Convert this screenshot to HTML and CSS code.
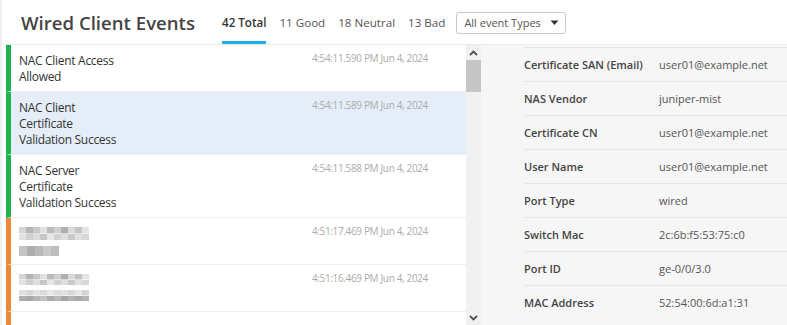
FILE: index.html
```html
<!DOCTYPE html>
<html lang="en">
<head>
    <meta charset="UTF-8">
    <meta name="viewport" content="width=device-width, initial-scale=1.0">
    <title>Wired Client Events</title>
    <link rel="stylesheet" href="styles.css">
</head>
<body>

<div class="page">
    <div class="header">
        <h1>Wired Client Events</h1>
        <div class="tabs">
            <span class="tab active">42 Total</span>
            <span class="tab">11 Good</span>
            <span class="tab">18 Neutral</span>
            <span class="tab">13 Bad</span>
        </div>
        <div class="select">
            <span>All event Types</span>
            <svg width="9" height="6" viewBox="0 0 9 6"><path d="M0.5 0.5h8L4.5 5z" fill="#333"/></svg>
        </div>
    </div>

    <div class="content">
        <div class="list">
            <div class="event good">
                <div class="event-name">NAC Client Access Allowed</div>
                <div class="event-time">4:54:11.590 PM Jun 4, 2024</div>
            </div>
            <div class="event good selected">
                <div class="event-name">NAC Client Certificate Validation Success</div>
                <div class="event-time">4:54:11.589 PM Jun 4, 2024</div>
            </div>
            <div class="event good">
                <div class="event-name">NAC Server Certificate Validation Success</div>
                <div class="event-time">4:54:11.588 PM Jun 4, 2024</div>
            </div>
            <div class="event neutral">
                <div class="event-name">
                    <div class="mosaic m1"></div>
                    <div class="mosaic m2 short"></div>
                </div>
                <div class="event-time">4:51:17.469 PM Jun 4, 2024</div>
            </div>
            <div class="event neutral">
                <div class="event-name">
                    <div class="mosaic m3"></div>
                    <div class="mosaic m4"></div>
                </div>
                <div class="event-time">4:51:16.469 PM Jun 4, 2024</div>
            </div>
            <div class="event neutral">
                <div class="event-name"></div>
            </div>
        </div>

        <div class="scrollbar">
            <div class="arrow">
                <svg width="9" height="6" viewBox="0 0 9 6"><path d="M1 5L4.5 1.5L8 5" fill="none" stroke="#505050" stroke-width="1.8"/></svg>
            </div>
            <div class="thumb"></div>
            <div class="track"></div>
            <div class="arrow">
                <svg width="9" height="6" viewBox="0 0 9 6"><path d="M1 1L4.5 4.5L8 1" fill="none" stroke="#505050" stroke-width="1.8"/></svg>
            </div>
        </div>

        <div class="details">
            <div class="detail-row"><span class="detail-label">Certificate SAN (Email)</span><span class="detail-value">user01@example.net</span></div>
            <div class="detail-row"><span class="detail-label">NAS Vendor</span><span class="detail-value">juniper-mist</span></div>
            <div class="detail-row"><span class="detail-label">Certificate CN</span><span class="detail-value">user01@example.net</span></div>
            <div class="detail-row"><span class="detail-label">User Name</span><span class="detail-value">user01@example.net</span></div>
            <div class="detail-row"><span class="detail-label">Port Type</span><span class="detail-value">wired</span></div>
            <div class="detail-row"><span class="detail-label">Switch Mac</span><span class="detail-value">2c:6b:f5:53:75:c0</span></div>
            <div class="detail-row"><span class="detail-label">Port ID</span><span class="detail-value">ge-0/0/3.0</span></div>
            <div class="detail-row"><span class="detail-label">MAC Address</span><span class="detail-value">52:54:00:6d:a1:31</span></div>
        </div>
    </div>
</div>

</body>
</html>
```

FILE: styles.css
```css
body {
    margin: 0;
    font-family: "Open Sans", sans-serif;
    background-color: #fff;
    overflow: hidden;
}
.page {
    height: 325px;
    border-left: 2px solid #f0f0f0;
    overflow: hidden;
}
.header {
    display: flex;
    align-items: flex-start;
    height: 44px;
    border-bottom: 1px solid #ebebeb;
    padding-left: 19px;
}
h1 {
    margin: 9px 0 0;
    font-size: 18.6px;
    line-height: 27px;
    font-weight: 600;
    color: #444;
}
.tabs {
    display: flex;
    gap: 13px;
    margin-left: 27px;
}
.tab {
    padding: 15px 0 10px;
    font-size: 11.6px;
    line-height: 16px;
    color: #555;
    border-bottom: 3px solid transparent;
}
.tab.active {
    font-weight: 600;
    color: #333;
    border-bottom-color: #1db2e6;
}
.select {
    display: flex;
    align-items: center;
    gap: 9px;
    margin: 12px 0 0 11px;
    height: 20px;
    padding: 0 6px 0 7px;
    border: 1px solid #c8c8c8;
    border-radius: 3px;
    font-size: 11px;
    line-height: 20px;
    color: #555;
}
.content {
    display: flex;
    height: 280px;
}
.list {
    width: 460px;
    margin-left: 4px;
    overflow: hidden;
}
.event {
    display: flex;
    justify-content: space-between;
    padding: 8px 38px 6px 8px;
    border-left: 5px solid #20b24c;
    border-bottom: 1px solid #efefef;
}
.event.neutral {
    border-left-color: #f0883a;
}
.event.selected {
    background-color: #e5eef8;
}
.event-name {
    width: 104px;
    min-height: 32px;
    font-size: 12px;
    letter-spacing: -0.3px;
    line-height: 16px;
    color: #333;
}
.event-time {
    margin-top: -3px;
    font-size: 10px;
    letter-spacing: -0.35px;
    line-height: 16px;
    color: #ababab;
}
.mosaic {
    width: 70px;
    height: 13px;
    margin-top: 1px;
    background:
        linear-gradient(90deg, #d6d6d6 0 7px, #b4b4b4 7px 14px, #c8c8c8 14px 21px, #e0e0e0 21px 28px, #bcbcbc 28px 35px, #d0d0d0 35px 42px, #b0b0b0 42px 49px, #dadada 49px 56px, #c4c4c4 56px 63px, #e4e4e4 63px 70px) top / 100% 50% no-repeat,
        linear-gradient(90deg, #e2e2e2 0 7px, #cfcfcf 7px 14px, #dcdcdc 14px 21px, #c6c6c6 21px 28px, #e6e6e6 28px 35px, #d2d2d2 35px 42px, #dedede 42px 49px, #cacaca 49px 56px, #e0e0e0 56px 63px, #d8d8d8 63px 70px) bottom / 100% 50% no-repeat;
}
.mosaic.m2 {
    height: 10px;
    margin-top: 6px;
    background: linear-gradient(90deg, #c4c4c4 0 8px, #adadad 8px 16px, #b8b8b8 16px 24px, #c8c8c8 24px 32px, #bdbdbd 32px 40px);
}
.mosaic.short {
    width: 40px;
}
.mosaic.m3 {
    margin-top: 1px;
    height: 11px;
}
.mosaic.m4 {
    width: 70px;
    height: 11px;
    margin-top: 5px;
    background:
        linear-gradient(90deg, #e0e0e0 0 7px, #d6d6d6 7px 14px, #e4e4e4 14px 21px, #dadada 21px 28px, #e8e8e8 28px 35px, #dcdcdc 35px 42px, #e2e2e2 42px 49px, #d8d8d8 49px 56px, #e6e6e6 56px 63px, #d4d4d4 63px 70px) top / 100% 50% no-repeat,
        linear-gradient(90deg, #b0b0b0 0 7px, #a8a8a8 7px 14px, #b6b6b6 14px 21px, #c2c2c2 21px 28px, #acacac 28px 35px, #bababa 35px 42px, #a6a6a6 42px 49px, #b2b2b2 49px 56px, #a9a9a9 56px 63px, #b4b4b4 63px 70px) bottom / 100% 50% no-repeat;
}
.scrollbar {
    display: flex;
    flex-direction: column;
    width: 15px;
    background-color: #f1f1f1;
}
.arrow {
    height: 15px;
    display: flex;
    justify-content: center;
    align-items: center;
}
.thumb {
    height: 32px;
    background-color: #c6c6c6;
}
.track {
    flex: 1;
}
.details {
    flex: 1;
    padding-top: 2px;
    background-color: #f6f6f6;
}
.detail-row {
    display: flex;
    margin-left: 43px;
    height: 33px;
    line-height: 33px;
    border-top: 1px solid #e6e6e6;
    font-size: 11px;
    white-space: nowrap;
}
.detail-label {
    width: 135px;
    font-weight: 600;
    color: #444;
}
.detail-value {
    color: #555;
}
```
